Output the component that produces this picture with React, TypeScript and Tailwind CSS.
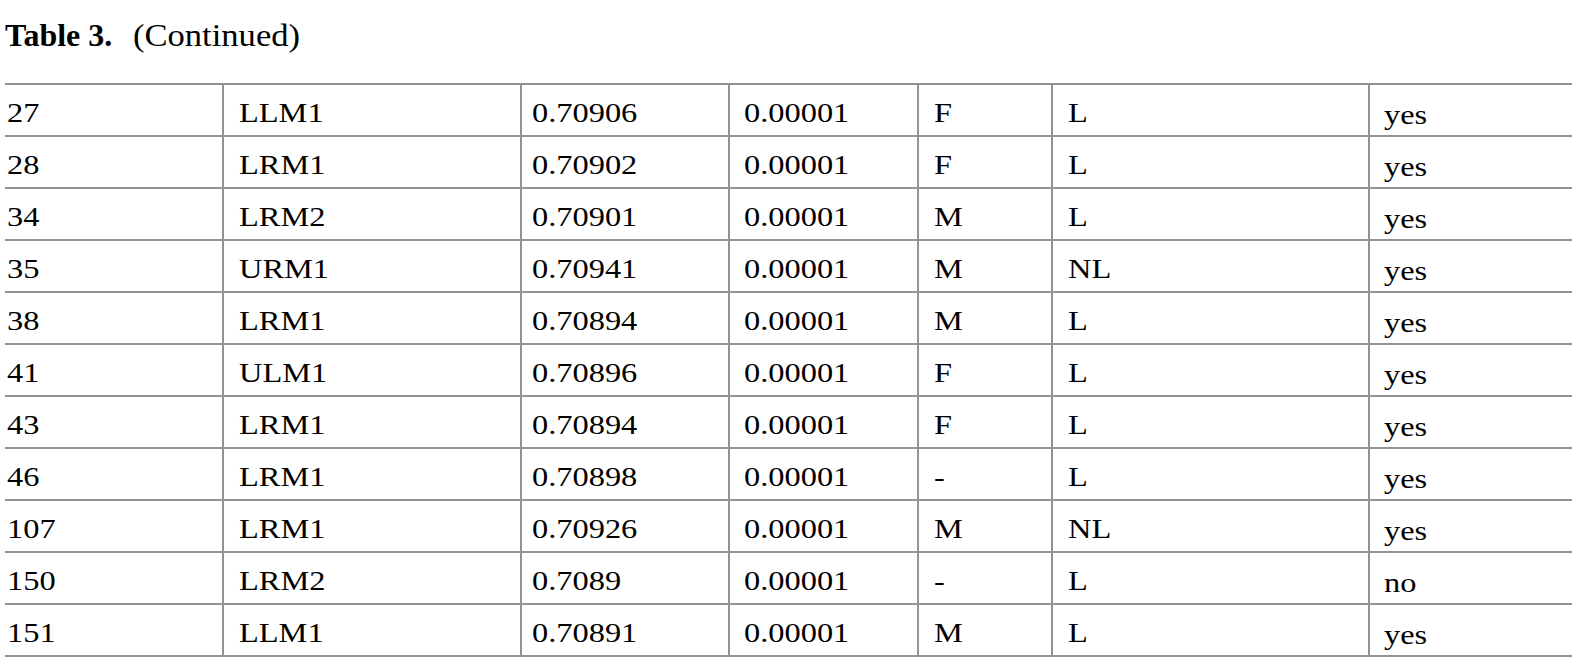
const rows = [
  ['27', 'LLM1', '0.70906', '0.00001', 'F', 'L', 'yes'],
  ['28', 'LRM1', '0.70902', '0.00001', 'F', 'L', 'yes'],
  ['34', 'LRM2', '0.70901', '0.00001', 'M', 'L', 'yes'],
  ['35', 'URM1', '0.70941', '0.00001', 'M', 'NL', 'yes'],
  ['38', 'LRM1', '0.70894', '0.00001', 'M', 'L', 'yes'],
  ['41', 'ULM1', '0.70896', '0.00001', 'F', 'L', 'yes'],
  ['43', 'LRM1', '0.70894', '0.00001', 'F', 'L', 'yes'],
  ['46', 'LRM1', '0.70898', '0.00001', '-', 'L', 'yes'],
  ['107', 'LRM1', '0.70926', '0.00001', 'M', 'NL', 'yes'],
  ['150', 'LRM2', '0.7089', '0.00001', '-', 'L', 'no'],
  ['151', 'LLM1', '0.70891', '0.00001', 'M', 'L', 'yes'],
]

// column widths + left padding, measured off the reference
const cols = [
  { w: 'w-[218px]', pad: 'pl-[2px] pt-[6px]' },
  { w: 'w-[298px]', pad: 'pl-[15px] pt-[6px] border-l-2' },
  { w: 'w-[208px]', pad: 'pl-[10px] pt-[6px] border-l-2' },
  { w: 'w-[189px]', pad: 'pl-[14px] pt-[6px] border-l-2' },
  { w: 'w-[134px]', pad: 'pl-[15px] pt-[6px] border-l-2' },
  { w: 'w-[317px]', pad: 'pl-[15px] pt-[6px] border-l-2' },
  { w: 'w-[203px]', pad: 'pl-[14px] pt-[10px] border-l-2' },
]

export default function App() {
  return (
    <div className="w-[1575px] h-[670px] bg-white overflow-hidden px-[5px] text-black font-['Liberation_Serif',serif]">
      {/* ------------------ Title ------------------ */}
      <div className="pt-[19px] h-[50px] text-[32px] leading-none whitespace-nowrap">
        <b className="inline-block w-[128px]">Table 3.</b>
        <span className="inline-block origin-left scale-x-[1.08]">(Continued)</span>
      </div>

      {/* ------------------ Table ------------------ */}
      <table className="mt-[33px] w-[1567px] border-collapse table-fixed border-t-2 border-[#939393]">
        <tbody>
          {rows.map((r, i) => (
            <tr key={i} className="border-b-2 border-[#939393]">
              {r.map((c, j) => (
                <td
                  key={j}
                  className={`${cols[j].w} ${cols[j].pad} h-[52px] pb-0 pr-0 align-middle border-[#939393] text-[27px] leading-none`}
                >
                  <span className="inline-block origin-left scale-x-[1.2]">{c}</span>
                </td>
              ))}
            </tr>
          ))}
        </tbody>
      </table>
    </div>
  )
}
